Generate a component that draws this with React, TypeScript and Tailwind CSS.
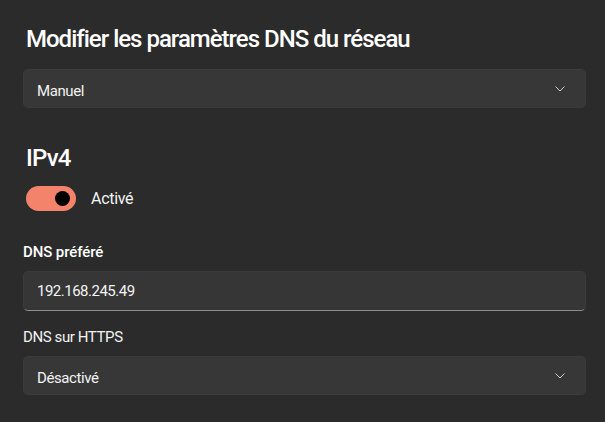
import React from "react";

const Chevron = () => (
  <svg width="10" height="6" viewBox="0 0 10 6" fill="none">
    <path d="M0.8 0.8 L5 5 L9.2 0.8" stroke="#cfcfcf" strokeWidth="1" strokeLinecap="round" strokeLinejoin="round" />
  </svg>
);

const Select = ({ value }: { value: string }) => (
  <div className="flex items-center justify-between h-[39px] rounded-[5px] bg-[#373737] border border-[#3b3b3b] pl-[13px] pr-[20px] pt-[4px]">
    <span className="text-[15px] leading-[20px] tracking-[-0.4px] text-[#f3f3f3]">{value}</span>
    <span className="-mt-[4px] flex">
      <Chevron />
    </span>
  </div>
);

export default function App() {
  return (
    <div
      className="w-[605px] h-[422px] bg-[#2b2b2b] text-white px-[23px] pt-[24px] flex flex-col"
      style={{ fontFamily: "Roboto, 'Noto Sans', sans-serif" }}
    >
      <h1 className="text-[24px] font-medium leading-[30px] pl-[3px] tracking-[-1px]">
        Modifier les paramètres DNS du réseau
      </h1>
      <div className="mt-[15px] w-[563px]">
        <Select value="Manuel" />
      </div>

      <h2 className="mt-[36px] text-[24px] font-medium leading-[28px] pl-[3px] tracking-[-0.8px]">IPv4</h2>
      <div className="mt-[14px] pl-[3px] flex items-center gap-[15px]">
        <div className="w-[50px] h-[25px] rounded-full bg-[#f4836b] flex items-center justify-end pr-[6px]">
          <div className="w-[15px] h-[15px] rounded-full bg-black" />
        </div>
        <span className="text-[16px] leading-[20px] tracking-[-0.3px] text-[#f3f3f3]">Activé</span>
      </div>

      <div className="mt-[31px] text-[15px] font-medium leading-[20px] tracking-[-0.1px]">DNS préféré</div>
      <div className="mt-[9px] w-[563px] h-[40px] rounded-[5px] bg-[#363636] border border-[#3b3b3b] border-b-[#8e8e8e] flex items-center pl-[13px]">
        <span className="text-[15px] leading-[20px] tracking-[-0.5px] text-[#f3f3f3]">192.168.245.49</span>
      </div>

      <div className="mt-[16px] text-[15px] leading-[20px] tracking-[-0.4px] text-[#f3f3f3]">DNS sur HTTPS</div>
      <div className="mt-[9px] w-[563px]">
        <Select value="Désactivé" />
      </div>
    </div>
  );
}
